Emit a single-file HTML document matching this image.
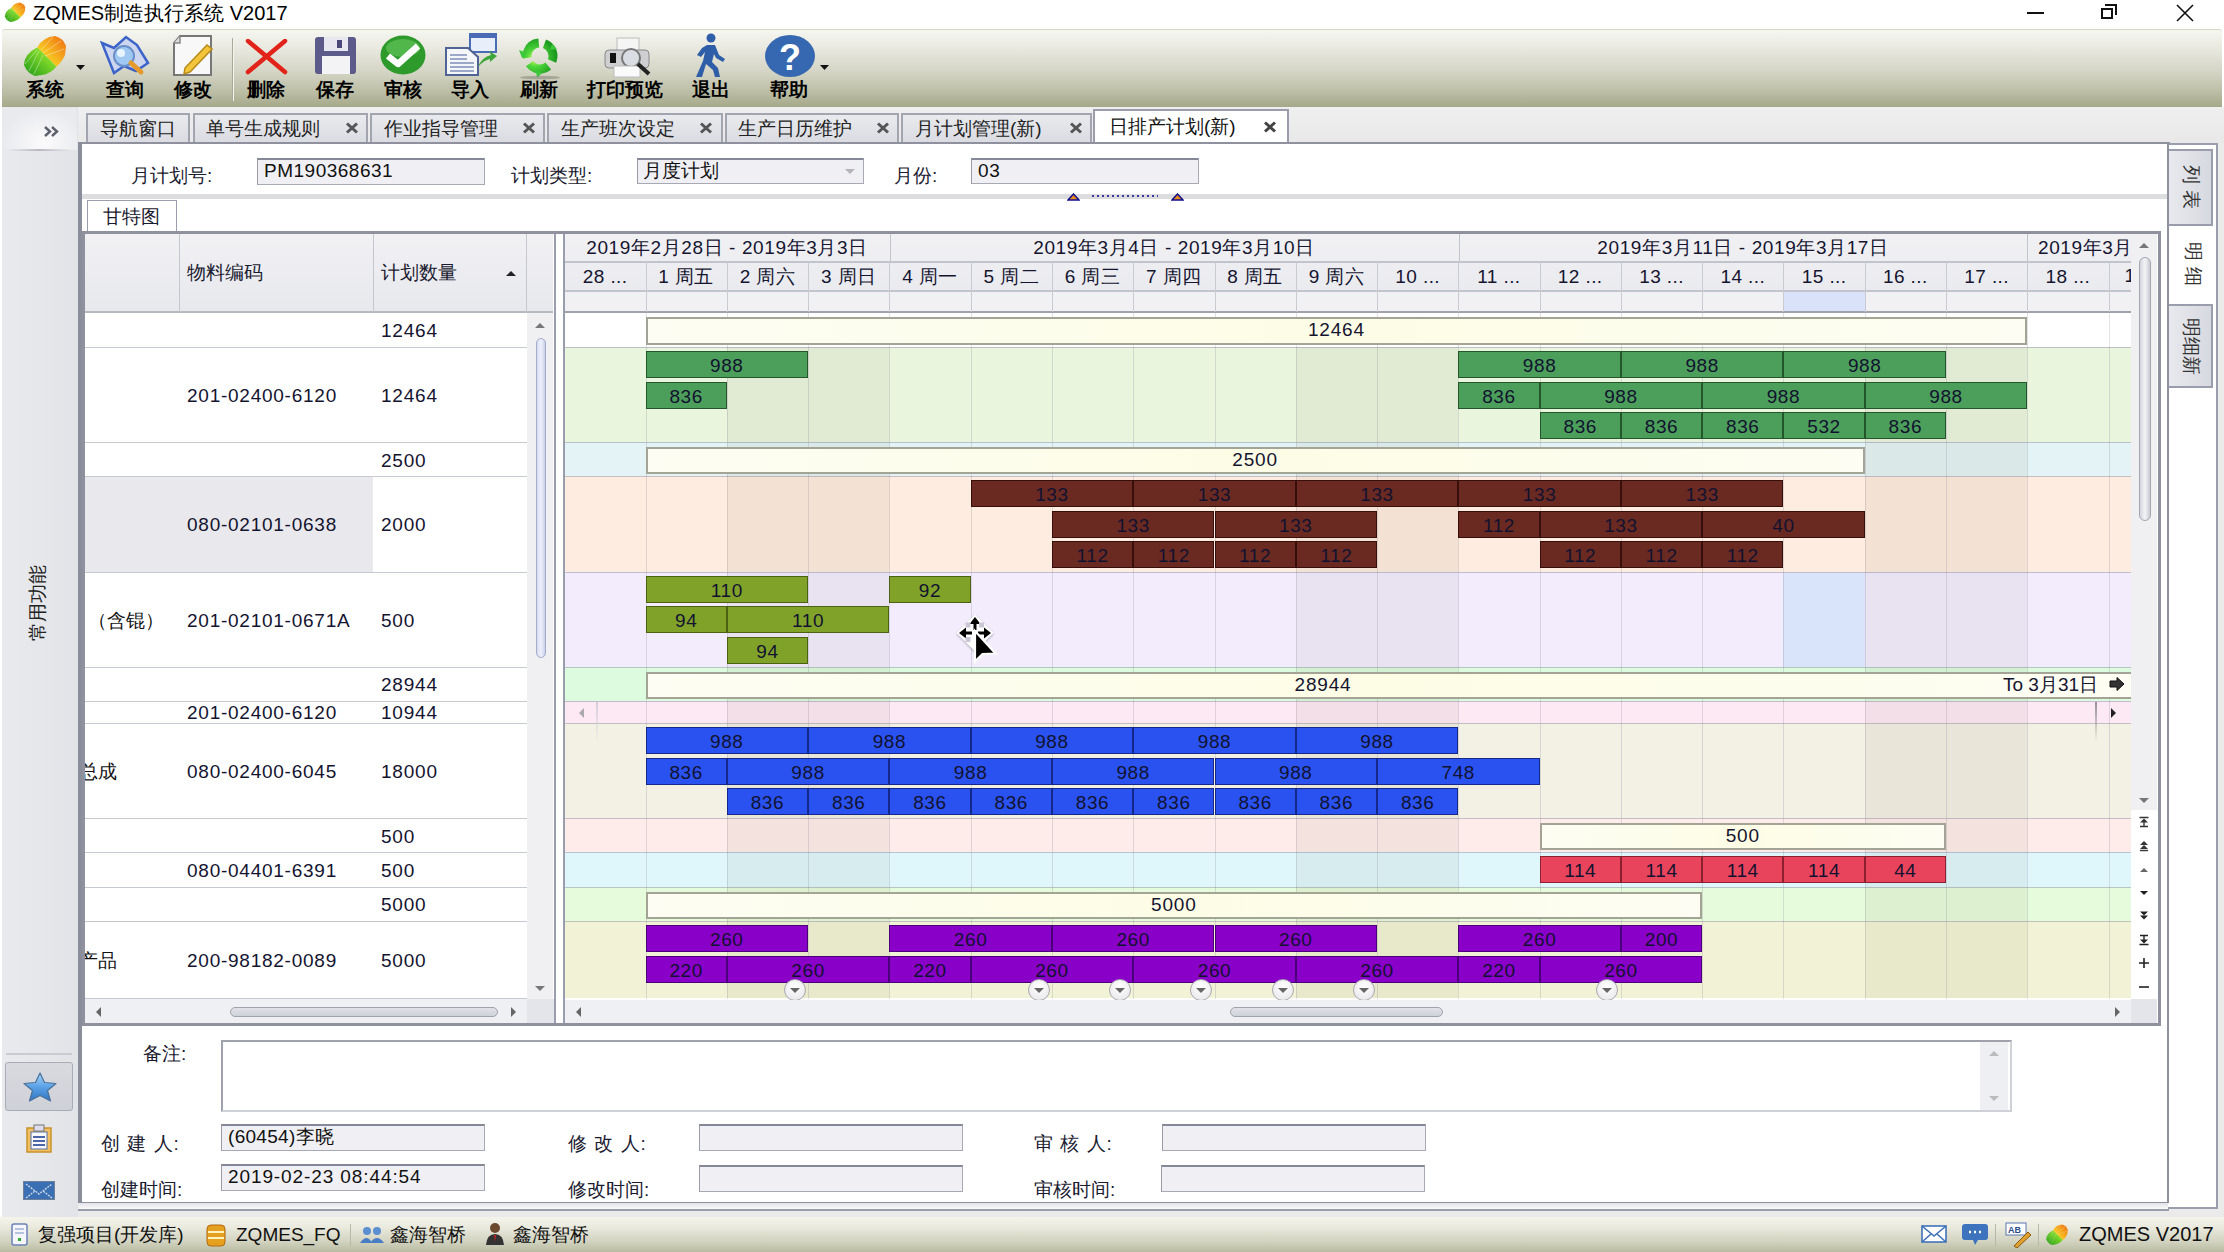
<!DOCTYPE html><html><head><meta charset="utf-8"><style>
*{margin:0;padding:0;box-sizing:border-box}
html,body{width:2224px;height:1252px;overflow:hidden;background:#ffffff;font-family:"Liberation Sans", sans-serif;color:#111}
body{position:relative}
.a{position:absolute}
.c{display:inline-block;min-width:1em;font-style:normal;text-align:center}
.t{position:absolute;white-space:nowrap;font-size:19px;line-height:22px;color:#16162a}
.bar{position:absolute;height:27px;text-align:center;font-size:19px;color:#121230;white-space:nowrap;overflow:hidden;letter-spacing:0.6px}
</style></head><body>
<div class="a" style="left:0;top:0;width:2224px;height:28px;background:#fff"></div>
<svg class="a" style="left:3px;top:2px" width="24" height="20" viewBox="0 0 44 41"><defs><linearGradient id="lgg1" x1="1" y1="0" x2="0" y2="1"><stop offset="0" stop-color="#d8f01a"/><stop offset="0.35" stop-color="#7fd82a"/><stop offset="1" stop-color="#1f9a16"/></linearGradient><linearGradient id="lgo1" x1="0" y1="1" x2="1" y2="0"><stop offset="0" stop-color="#f8f01a"/><stop offset="0.45" stop-color="#f6b820"/><stop offset="1" stop-color="#ee6a10"/></linearGradient></defs><path d="M14.4 12.2L33.6 31.4Q27 39 19 40L12 41Q4 38 1 30Q1 19 14.4 12.2Z" fill="url(#lgg1)"/><path d="M14.4 12.2L33.6 31.4Q39 27 42 20L43 11Q40 3 32 1Q20 2 14.4 12.2Z" fill="url(#lgo1)"/><path d="M6 36L16 16M11 39L20 20M2 29L14 15M20 18L38 6M22 21L41 14M18 15L30 2" stroke="#ffffff" stroke-width="0.8" opacity="0.45"/></svg>
<div class="t" style="left:33px;top:1px;font-size:20px;line-height:24px;color:#000">ZQMES<i class="c">制</i><i class="c">造</i><i class="c">执</i><i class="c">行</i><i class="c">系</i><i class="c">统</i> V2017</div>
<div class="a" style="left:2027px;top:12px;width:17px;height:2px;background:#111"></div>
<div class="a" style="left:2101px;top:8px;width:12px;height:11px;border:2px solid #111;background:#fff"></div>
<div class="a" style="left:2105px;top:4px;width:12px;height:11px;border-top:2px solid #111;border-right:2px solid #111"></div>
<svg class="a" style="left:2176px;top:4px" width="18" height="18"><path d="M1 1L17 17M17 1L1 17" stroke="#111" stroke-width="1.6"/></svg>
<div class="a" style="left:2px;top:29px;width:2220px;height:79px;background:linear-gradient(#f6f6f1 0%,#ebebe3 20%,#d3d4c4 55%,#bcbea6 80%,#a6a88a 100%);border-top:1px solid #d8d8c8;border-bottom:1px solid #8e9072;border-radius:3px 3px 0 0"></div>
<div class="t" style="left:26px;top:79px;font-size:19px;line-height:22px;color:#000;font-weight:bold;letter-spacing:0px"><i class="c">系</i><i class="c">统</i></div>
<div class="t" style="left:106px;top:79px;font-size:19px;line-height:22px;color:#000;font-weight:bold;letter-spacing:0px"><i class="c">查</i><i class="c">询</i></div>
<div class="t" style="left:174px;top:79px;font-size:19px;line-height:22px;color:#000;font-weight:bold;letter-spacing:0px"><i class="c">修</i><i class="c">改</i></div>
<div class="t" style="left:247px;top:79px;font-size:19px;line-height:22px;color:#000;font-weight:bold;letter-spacing:0px"><i class="c">删</i><i class="c">除</i></div>
<div class="t" style="left:316px;top:79px;font-size:19px;line-height:22px;color:#000;font-weight:bold;letter-spacing:0px"><i class="c">保</i><i class="c">存</i></div>
<div class="t" style="left:384px;top:79px;font-size:19px;line-height:22px;color:#000;font-weight:bold;letter-spacing:0px"><i class="c">审</i><i class="c">核</i></div>
<div class="t" style="left:451px;top:79px;font-size:19px;line-height:22px;color:#000;font-weight:bold;letter-spacing:0px"><i class="c">导</i><i class="c">入</i></div>
<div class="t" style="left:520px;top:79px;font-size:19px;line-height:22px;color:#000;font-weight:bold;letter-spacing:0px"><i class="c">刷</i><i class="c">新</i></div>
<div class="t" style="left:587px;top:79px;font-size:19px;line-height:22px;color:#000;font-weight:bold;letter-spacing:0px"><i class="c">打</i><i class="c">印</i><i class="c">预</i><i class="c">览</i></div>
<div class="t" style="left:692px;top:79px;font-size:19px;line-height:22px;color:#000;font-weight:bold;letter-spacing:0px"><i class="c">退</i><i class="c">出</i></div>
<div class="t" style="left:770px;top:79px;font-size:19px;line-height:22px;color:#000;font-weight:bold;letter-spacing:0px"><i class="c">帮</i><i class="c">助</i></div>
<div class="a" style="left:232px;top:38px;width:1px;height:63px;background:#a9aa98"></div>
<div class="a" style="left:233px;top:38px;width:1px;height:63px;background:#f4f4ee"></div>
<svg class="a" style="left:23px;top:35px" width="44" height="41" viewBox="0 0 44 41"><defs><linearGradient id="lgg2" x1="1" y1="0" x2="0" y2="1"><stop offset="0" stop-color="#d8f01a"/><stop offset="0.35" stop-color="#7fd82a"/><stop offset="1" stop-color="#1f9a16"/></linearGradient><linearGradient id="lgo2" x1="0" y1="1" x2="1" y2="0"><stop offset="0" stop-color="#f8f01a"/><stop offset="0.45" stop-color="#f6b820"/><stop offset="1" stop-color="#ee6a10"/></linearGradient></defs><path d="M14.4 12.2L33.6 31.4Q27 39 19 40L12 41Q4 38 1 30Q1 19 14.4 12.2Z" fill="url(#lgg2)"/><path d="M14.4 12.2L33.6 31.4Q39 27 42 20L43 11Q40 3 32 1Q20 2 14.4 12.2Z" fill="url(#lgo2)"/><path d="M6 36L16 16M11 39L20 20M2 29L14 15M20 18L38 6M22 21L41 14M18 15L30 2" stroke="#ffffff" stroke-width="0.8" opacity="0.45"/></svg>
<svg class="a" style="left:76px;top:65px" width="10" height="6"><path d="M0 0H9L4.5 5Z" fill="#111"/></svg>
<svg class="a" style="left:820px;top:65px" width="10" height="6"><path d="M0 0H9L4.5 5Z" fill="#111"/></svg>
<svg class="a" style="left:100px;top:34px" width="50" height="44"><path d="M2 9L14 14L26 3L37 11L48 29L36 37L24 32L14 39Z" fill="#cdd6ee" stroke="#3b63c9" stroke-width="2.5"/><circle cx="24" cy="22" r="10" fill="#9fc8f3" stroke="#6a8fc9" stroke-width="2"/><circle cx="21" cy="19" r="4" fill="#e8f4ff"/><path d="M31 29L41 38" stroke="#e49a2c" stroke-width="5" stroke-linecap="round"/></svg>
<svg class="a" style="left:172px;top:35px" width="44" height="42"><path d="M8 1H39V40H2V8Z" fill="#f8f8f8" stroke="#777" stroke-width="2"/><path d="M2 8H8V1" fill="#ddd" stroke="#888" stroke-width="1.5"/><path d="M13 33L35 10L40 14L18 37L12 39Z" fill="#f2c53a" stroke="#b88a18" stroke-width="1.5"/></svg>
<svg class="a" style="left:245px;top:39px" width="44" height="36"><path d="M3 2L40 33M40 2L3 33" stroke="#e2231a" stroke-width="4.5" stroke-linecap="round"/></svg>
<svg class="a" style="left:313px;top:36px" width="46" height="40"><rect x="2" y="1" width="41" height="37" rx="3" fill="#5c5a8a"/><rect x="11" y="1" width="24" height="14" fill="#e7e7ef"/><rect x="24" y="4" width="5" height="8" fill="#4a4878"/><rect x="9" y="20" width="28" height="18" fill="#f3f3f6"/></svg>
<svg class="a" style="left:379px;top:35px" width="48" height="40"><ellipse cx="24" cy="20" rx="22.5" ry="19.5" fill="#2e9a2b"/><ellipse cx="24" cy="13" rx="17" ry="9" fill="#6fd066" opacity="0.55"/><path d="M9 21L19 29L39 11" stroke="#fff" stroke-width="6.5" fill="none" stroke-linejoin="round"/></svg>
<svg class="a" style="left:445px;top:33px" width="54" height="46"><rect x="25" y="1" width="26" height="18" fill="#e8eefa" stroke="#4a6cb4" stroke-width="2"/><rect x="25" y="1" width="26" height="4" fill="#4a6cb4"/><path d="M1 15H23L33 24V42H1Z" fill="#f4f6fa" stroke="#4f6394" stroke-width="2"/><path d="M5 22H22M5 26H22M5 30H29M5 34H29M5 38H29" stroke="#7d8fb8" stroke-width="1.5"/><path d="M33 34Q37 24 46 22L44 18L52 23L45 29L45 26Q39 27 33 34Z" fill="#3ea53a"/></svg>
<svg class="a" style="left:515px;top:36px" width="50" height="44"><defs><radialGradient id="rcg" cx="0.35" cy="0.35" r="0.8"><stop offset="0" stop-color="#d8ff60"/><stop offset="0.4" stop-color="#4fd83a"/><stop offset="1" stop-color="#1c9a20"/></radialGradient></defs><circle cx="25" cy="20" r="13" stroke="url(#rcg)" stroke-width="9" fill="none" stroke-dasharray="21 6.2" transform="rotate(-70 25 20)"/><path d="M37 8L42 13L35 14Z M7 22L4 14L12 17Z M27 37L22 42L21 34Z" fill="#3cc83a"/><ellipse cx="25" cy="41.5" rx="20" ry="1.8" fill="#8a8a7c" opacity="0.6"/></svg>
<svg class="a" style="left:602px;top:36px" width="52" height="42"><rect x="15" y="2" width="22" height="14" fill="#f5f5f5" stroke="#bbb"/><rect x="3" y="14" width="44" height="18" rx="4" fill="#cfcfd2" stroke="#888"/><rect x="8" y="17" width="6" height="10" fill="#111"/><circle cx="29" cy="22" r="9" fill="#d9dde3" stroke="#777" stroke-width="2"/><rect x="12" y="30" width="26" height="11" fill="#fafafa" stroke="#bbb"/><path d="M36 28L47 38" stroke="#222" stroke-width="4"/></svg>
<svg class="a" style="left:693px;top:33px" width="36" height="46"><circle cx="18" cy="5" r="4.5" fill="#2f5ea8"/><path d="M14 12L22 12L26 22L32 26L30 29L23 25L21 21L19 29L25 35L27 44L22 44L20 37L13 31L9 44L3 44L10 28L12 19L8 24L4 22L9 15Z" fill="#2f5ea8"/></svg>
<svg class="a" style="left:764px;top:34px" width="52" height="44"><ellipse cx="26" cy="22" rx="25" ry="21" fill="#3568b0"/><text x="26" y="36" text-anchor="middle" font-family="Liberation Sans" font-weight="bold" font-size="36" fill="#fff">?</text></svg>
<div class="a" style="left:0;top:107px;width:2224px;height:1110px;background:#eaeaea"></div>
<div class="a" style="left:0;top:107px;width:2224px;height:36px;background:linear-gradient(#efefef,#e8e8e8)"></div>
<div class="a" style="left:86px;top:113px;width:104px;height:31px;background:linear-gradient(#e9eaee,#d9dbe1);border:2px solid #a2a5b0;border-bottom:none"></div>
<div class="t" style="left:100px;top:118px;font-size:19px;line-height:22px;color:#222"><i class="c">导</i><i class="c">航</i><i class="c">窗</i><i class="c">口</i></div>
<div class="a" style="left:193px;top:113px;width:175px;height:31px;background:linear-gradient(#e9eaee,#d9dbe1);border:2px solid #a2a5b0;border-bottom:none"></div>
<div class="t" style="left:206px;top:118px;font-size:19px;line-height:22px;color:#222"><i class="c">单</i><i class="c">号</i><i class="c">生</i><i class="c">成</i><i class="c">规</i><i class="c">则</i></div>
<svg class="a" style="left:345px;top:122px" width="14" height="12"><path d="M2 1.5L12 10.5M12 1.5L2 10.5" stroke="#555" stroke-width="3"/></svg>
<div class="a" style="left:370px;top:113px;width:175px;height:31px;background:linear-gradient(#e9eaee,#d9dbe1);border:2px solid #a2a5b0;border-bottom:none"></div>
<div class="t" style="left:384px;top:118px;font-size:19px;line-height:22px;color:#222"><i class="c">作</i><i class="c">业</i><i class="c">指</i><i class="c">导</i><i class="c">管</i><i class="c">理</i></div>
<svg class="a" style="left:522px;top:122px" width="14" height="12"><path d="M2 1.5L12 10.5M12 1.5L2 10.5" stroke="#555" stroke-width="3"/></svg>
<div class="a" style="left:547px;top:113px;width:176px;height:31px;background:linear-gradient(#e9eaee,#d9dbe1);border:2px solid #a2a5b0;border-bottom:none"></div>
<div class="t" style="left:561px;top:118px;font-size:19px;line-height:22px;color:#222"><i class="c">生</i><i class="c">产</i><i class="c">班</i><i class="c">次</i><i class="c">设</i><i class="c">定</i></div>
<svg class="a" style="left:699px;top:122px" width="14" height="12"><path d="M2 1.5L12 10.5M12 1.5L2 10.5" stroke="#555" stroke-width="3"/></svg>
<div class="a" style="left:725px;top:113px;width:174px;height:31px;background:linear-gradient(#e9eaee,#d9dbe1);border:2px solid #a2a5b0;border-bottom:none"></div>
<div class="t" style="left:738px;top:118px;font-size:19px;line-height:22px;color:#222"><i class="c">生</i><i class="c">产</i><i class="c">日</i><i class="c">历</i><i class="c">维</i><i class="c">护</i></div>
<svg class="a" style="left:876px;top:122px" width="14" height="12"><path d="M2 1.5L12 10.5M12 1.5L2 10.5" stroke="#555" stroke-width="3"/></svg>
<div class="a" style="left:901px;top:113px;width:191px;height:31px;background:linear-gradient(#e9eaee,#d9dbe1);border:2px solid #a2a5b0;border-bottom:none"></div>
<div class="t" style="left:915px;top:118px;font-size:19px;line-height:22px;color:#222"><i class="c">月</i><i class="c">计</i><i class="c">划</i><i class="c">管</i><i class="c">理</i>(<i class="c">新</i>)</div>
<svg class="a" style="left:1069px;top:122px" width="14" height="12"><path d="M2 1.5L12 10.5M12 1.5L2 10.5" stroke="#555" stroke-width="3"/></svg>
<div class="a" style="left:1093px;top:109px;width:196px;height:35px;background:#fff;border:2px solid #9a9dab;border-bottom:none"></div>
<div class="t" style="left:1109px;top:116px;font-size:19px;line-height:22px;color:#111"><i class="c">日</i><i class="c">排</i><i class="c">产</i><i class="c">计</i><i class="c">划</i>(<i class="c">新</i>)</div>
<svg class="a" style="left:1263px;top:121px" width="14" height="12"><path d="M2 1.5L12 10.5M12 1.5L2 10.5" stroke="#444" stroke-width="3"/></svg>
<div class="a" style="left:0;top:107px;width:2px;height:1110px;background:#fff"></div>
<div class="a" style="left:2px;top:107px;width:76px;height:1110px;background:linear-gradient(90deg,#e9eaee,#e5e6ea 60%,#e2e3e8)"></div>
<div class="a" style="left:2px;top:108px;width:75px;height:42px;background:radial-gradient(ellipse at 55% 85%,#fbfbfc,#e9eaee 70%)"></div>
<svg class="a" style="left:44px;top:126px" width="16" height="11"><path d="M1 1L6 5.5L1 10M8 1L13 5.5L8 10" stroke="#5d606c" stroke-width="2.4" fill="none"/></svg>
<div class="a" style="left:6px;top:149px;width:66px;height:2px;background:linear-gradient(90deg,rgba(180,180,190,0),#b8b9c2,rgba(180,180,190,0))"></div>
<div class="t" style="left:-2px;top:592px;width:80px;text-align:center;transform:rotate(-90deg);font-size:19px;line-height:22px;color:#222"><i class="c">常</i><i class="c">用</i><i class="c">功</i><i class="c">能</i></div>
<div class="a" style="left:6px;top:1053px;width:66px;height:2px;background:#c9cad2"></div>
<div class="a" style="left:5px;top:1062px;width:68px;height:49px;background:linear-gradient(#d9dae0,#cfd1d8);border:1px solid #a9abb5;border-radius:3px"></div>
<svg class="a" style="left:21px;top:1071px" width="38" height="32"><defs><linearGradient id="stg" x1="0" y1="0" x2="0" y2="1"><stop offset="0" stop-color="#a9d4f8"/><stop offset="0.5" stop-color="#5aa2e6"/><stop offset="1" stop-color="#2f74c4"/></linearGradient></defs><path d="M19 2L23.5 11.5L35 12.5L26.5 19.5L29.5 30L19 24.5L8.5 30L11.5 19.5L3 12.5L14.5 11.5Z" fill="url(#stg)" stroke="#4a6f9a" stroke-width="1.2" stroke-linejoin="round"/></svg>
<svg class="a" style="left:25px;top:1124px" width="30" height="30"><rect x="2" y="4" width="24" height="24" fill="#f2c060" stroke="#c9922a" stroke-width="1.5"/><rect x="6" y="8" width="16" height="17" fill="#f8f8fb" stroke="#5570a8"/><rect x="9" y="1" width="10" height="6" fill="#dde" stroke="#777"/><path d="M8 13H20M8 17H20M8 21H20" stroke="#4a66a8" stroke-width="2"/></svg>
<svg class="a" style="left:23px;top:1181px" width="32" height="19"><rect x="0.5" y="0.5" width="31" height="18" fill="#3b6fb4" stroke="#6d7f99"/><path d="M3 3L16 13L29 3M3 17L12 10M29 17L20 10" stroke="#c9d6e6" stroke-width="1.4" fill="none" stroke-dasharray="2 1"/></svg>
<div class="a" style="left:0;top:1217px;width:2224px;height:35px;background:linear-gradient(#f4f4ec,#e9e9dd 30%,#d2d3c0 70%,#b9bba0)"></div>
<div class="t" style="left:38px;top:1224px;font-size:19px;line-height:22px;color:#111"><i class="c">复</i><i class="c">强</i><i class="c">项</i><i class="c">目</i>(<i class="c">开</i><i class="c">发</i><i class="c">库</i>)</div>
<div class="t" style="left:236px;top:1224px;font-size:19px;line-height:22px;color:#111">ZQMES_FQ</div>
<div class="t" style="left:390px;top:1224px;font-size:19px;line-height:22px;color:#111"><i class="c">鑫</i><i class="c">海</i><i class="c">智</i><i class="c">桥</i></div>
<div class="t" style="left:513px;top:1224px;font-size:19px;line-height:22px;color:#111"><i class="c">鑫</i><i class="c">海</i><i class="c">智</i><i class="c">桥</i></div>
<svg class="a" style="left:11px;top:1223px" width="18" height="24"><rect x="1" y="1" width="15" height="21" rx="2" fill="#f4f6fb" stroke="#6b82b8" stroke-width="1.5"/><path d="M4 6H13M4 10H13" stroke="#7b8ec0"/><rect x="7" y="15" width="3" height="3" fill="#3a3"/></svg>
<svg class="a" style="left:206px;top:1224px" width="20" height="23"><rect x="1" y="1" width="18" height="21" rx="4" fill="#e6a020" stroke="#b06a10"/><path d="M2 8H18M2 14H18" stroke="#fff3c0" stroke-width="2"/></svg>
<div class="a" style="left:350px;top:1224px;width:1px;height:22px;background:#b9baa5"></div>
<svg class="a" style="left:359px;top:1225px" width="26" height="20"><circle cx="8" cy="6" r="4" fill="#5b8fd0"/><circle cx="18" cy="6" r="4" fill="#5b8fd0"/><path d="M1 18Q8 8 13 18M11 18Q18 8 25 18" fill="#4a7ec4"/></svg>
<svg class="a" style="left:485px;top:1222px" width="20" height="24"><circle cx="10" cy="6" r="5" fill="#6b4a30"/><path d="M1 23Q2 12 10 12Q18 12 19 23Z" fill="#333"/><path d="M9 13L10 20L11 13" fill="#c22"/></svg>
<svg class="a" style="left:1921px;top:1225px" width="26" height="19"><rect x="1" y="1" width="24" height="16" fill="#fff" stroke="#3f73b8" stroke-width="1.6"/><path d="M1 1L13 11L25 1M1 17L10 9M25 17L16 9" stroke="#3f73b8" stroke-width="1.6" fill="none"/></svg>
<svg class="a" style="left:1961px;top:1223px" width="28" height="24"><rect x="1" y="1" width="26" height="16" rx="3" fill="#3e74bd"/><path d="M12 17L14 22L17 17Z" fill="#3e74bd"/><path d="M8 9H10M13 9H15M18 9H20" stroke="#fff" stroke-width="2.5"/></svg>
<div class="a" style="left:1995px;top:1224px;width:1px;height:22px;background:#b9baa5"></div>
<svg class="a" style="left:2004px;top:1222px" width="28" height="26"><rect x="2" y="1" width="20" height="12" fill="#fff" stroke="#5778b0"/><text x="4" y="11" font-size="9" font-family="Liberation Sans" font-weight="bold" fill="#2b4c88">AB</text><path d="M10 24L24 10L27 13L13 26Z" fill="#e0a030" stroke="#8a5a10"/></svg>
<div class="a" style="left:2038px;top:1224px;width:1px;height:22px;background:#b9baa5"></div>
<svg class="a" style="left:2045px;top:1224px" width="24" height="21" viewBox="0 0 44 41"><defs><linearGradient id="lgg3" x1="1" y1="0" x2="0" y2="1"><stop offset="0" stop-color="#d8f01a"/><stop offset="0.35" stop-color="#7fd82a"/><stop offset="1" stop-color="#1f9a16"/></linearGradient><linearGradient id="lgo3" x1="0" y1="1" x2="1" y2="0"><stop offset="0" stop-color="#f8f01a"/><stop offset="0.45" stop-color="#f6b820"/><stop offset="1" stop-color="#ee6a10"/></linearGradient></defs><path d="M14.4 12.2L33.6 31.4Q27 39 19 40L12 41Q4 38 1 30Q1 19 14.4 12.2Z" fill="url(#lgg3)"/><path d="M14.4 12.2L33.6 31.4Q39 27 42 20L43 11Q40 3 32 1Q20 2 14.4 12.2Z" fill="url(#lgo3)"/><path d="M6 36L16 16M11 39L20 20M2 29L14 15M20 18L38 6M22 21L41 14M18 15L30 2" stroke="#ffffff" stroke-width="0.8" opacity="0.45"/></svg>
<div class="t" style="left:2079px;top:1223px;font-size:20px;line-height:22px;color:#111">ZQMES V2017</div>
<div class="a" style="left:79px;top:142px;width:2091px;height:1065px;background:#fff;border:2px solid #8f929e;border-right:none;border-bottom:none"></div>
<div class="a" style="left:79px;top:1202px;width:2091px;height:1px;background:#8f929e"></div>
<div class="a" style="left:79px;top:1203px;width:2091px;height:6px;background:linear-gradient(#e2e3e8,#fafafa)"></div>
<div class="a" style="left:78px;top:1209px;width:2140px;height:2px;background:#9a9dab"></div>
<div class="t" style="left:131px;top:165px;font-size:19px;line-height:22px;color:#1a1a30;"><i class="c">月</i><i class="c">计</i><i class="c">划</i><i class="c">号</i>:</div>
<div class="a" style="left:257px;top:158px;width:228px;height:27px;background:#f0f0f4;border:1px solid #a7aab5;border-top:2px solid #858896;border-left:1px solid #9a9da9"></div>
<div class="t" style="left:264px;top:160px;font-size:19px;line-height:22px;color:#111;letter-spacing:0.5px">PM190368631</div>
<div class="t" style="left:511px;top:165px;font-size:19px;line-height:22px;color:#1a1a30;"><i class="c">计</i><i class="c">划</i><i class="c">类</i><i class="c">型</i>:</div>
<div class="a" style="left:637px;top:158px;width:227px;height:26px;background:#f0f0f4;border:1px solid #a7aab5;border-top:2px solid #858896;border-left:1px solid #9a9da9"></div>
<div class="t" style="left:643px;top:160px;font-size:19px;line-height:22px;color:#111;letter-spacing:0"><i class="c">月</i><i class="c">度</i><i class="c">计</i><i class="c">划</i></div>
<svg class="a" style="left:845.0px;top:168.5px" width="10" height="5"><path d="M0 0H10L5 5Z" fill="#b5b5b5"/></svg>
<div class="t" style="left:894px;top:165px;font-size:19px;line-height:22px;color:#1a1a30;"><i class="c">月</i><i class="c">份</i>:</div>
<div class="a" style="left:971px;top:158px;width:228px;height:26px;background:#f0f0f4;border:1px solid #a7aab5;border-top:2px solid #858896;border-left:1px solid #9a9da9"></div>
<div class="t" style="left:978px;top:160px;font-size:19px;line-height:22px;color:#111;letter-spacing:0.6px">03</div>
<div class="a" style="left:82px;top:194px;width:2087px;height:5px;background:#dddddf"></div>
<svg class="a" style="left:1067px;top:193px" width="13" height="8"><path d="M6.5 1L12 7H1Z" fill="#f08a20" stroke="#10108a" stroke-width="1.5"/></svg>
<svg class="a" style="left:1171px;top:193px" width="13" height="8"><path d="M6.5 1L12 7H1Z" fill="#f08a20" stroke="#10108a" stroke-width="1.5"/></svg>
<div class="a" style="left:1092px;top:195px;width:66px;height:2px;background:repeating-linear-gradient(90deg,#3a3aa0 0 2px,transparent 2px 5px)"></div>
<div class="a" style="left:87px;top:200px;width:90px;height:33px;background:#fff;border:1px solid #9a9dab;border-bottom:none"></div>
<div class="t" style="left:103px;top:206px;font-size:19px;line-height:22px;color:#1a1a30;"><i class="c">甘</i><i class="c">特</i><i class="c">图</i></div>
<div class="a" style="left:82px;top:231px;width:2079px;height:795px;border:3px solid #8f929e;background:#fff"></div>
<div class="a" style="left:78px;top:142px;width:4px;height:1061px;background:#8a8d9a"></div>
<div class="a" style="left:85px;top:234px;width:468px;height:79px;background:linear-gradient(#f1f1f4,#e7e8ec)"></div>
<div class="a" style="left:85px;top:311px;width:468px;height:2px;background:#b6b8c2"></div>
<div class="a" style="left:179px;top:234px;width:1px;height:78px;background:#c5c7cf"></div>
<div class="a" style="left:373px;top:234px;width:1px;height:78px;background:#c5c7cf"></div>
<div class="a" style="left:526px;top:234px;width:1px;height:78px;background:#c5c7cf"></div>
<div class="t" style="left:187px;top:262px;font-size:19px;line-height:22px;color:#1a1a30;"><i class="c">物</i><i class="c">料</i><i class="c">编</i><i class="c">码</i></div>
<div class="t" style="left:381px;top:262px;font-size:19px;line-height:22px;color:#1a1a30;"><i class="c">计</i><i class="c">划</i><i class="c">数</i><i class="c">量</i></div>
<svg class="a" style="left:506.0px;top:270.5px" width="10" height="5"><path d="M0 5H10L5 0Z" fill="#222"/></svg>
<div class="a" style="left:85px;top:477px;width:288px;height:95px;background:#e9e9ed"></div>
<div class="a" style="left:85px;top:347px;width:442px;height:1px;background:#c6c8d2"></div>
<div class="t" style="left:381px;top:320px;font-size:19px;line-height:22px;color:#141430;letter-spacing:0.8px">12464</div>
<div class="a" style="left:85px;top:442px;width:442px;height:1px;background:#c6c8d2"></div>
<div class="t" style="left:187px;top:385px;font-size:19px;line-height:22px;color:#141430;letter-spacing:0.75px">201-02400-6120</div>
<div class="t" style="left:381px;top:385px;font-size:19px;line-height:22px;color:#141430;letter-spacing:0.8px">12464</div>
<div class="a" style="left:85px;top:476px;width:442px;height:1px;background:#c6c8d2"></div>
<div class="t" style="left:381px;top:450px;font-size:19px;line-height:22px;color:#141430;letter-spacing:0.8px">2500</div>
<div class="a" style="left:85px;top:572px;width:442px;height:1px;background:#c6c8d2"></div>
<div class="t" style="left:187px;top:514px;font-size:19px;line-height:22px;color:#141430;letter-spacing:0.75px">080-02101-0638</div>
<div class="t" style="left:381px;top:514px;font-size:19px;line-height:22px;color:#141430;letter-spacing:0.8px">2000</div>
<div class="a" style="left:85px;top:667px;width:442px;height:1px;background:#c6c8d2"></div>
<div class="t" style="left:88px;top:610px;font-size:19px;line-height:22px;color:#111"><i class="c">（</i><i class="c">含</i><i class="c">锟</i><i class="c">）</i></div>
<div class="t" style="left:187px;top:610px;font-size:19px;line-height:22px;color:#141430;letter-spacing:0.75px">201-02101-0671A</div>
<div class="t" style="left:381px;top:610px;font-size:19px;line-height:22px;color:#141430;letter-spacing:0.8px">500</div>
<div class="a" style="left:85px;top:701px;width:442px;height:1px;background:#c6c8d2"></div>
<div class="t" style="left:381px;top:674px;font-size:19px;line-height:22px;color:#141430;letter-spacing:0.8px">28944</div>
<div class="a" style="left:85px;top:723px;width:442px;height:1px;background:#c6c8d2"></div>
<div class="t" style="left:187px;top:702px;font-size:19px;line-height:22px;color:#141430;letter-spacing:0.75px">201-02400-6120</div>
<div class="t" style="left:381px;top:702px;font-size:19px;line-height:22px;color:#141430;letter-spacing:0.8px">10944</div>
<div class="a" style="left:85px;top:818px;width:442px;height:1px;background:#c6c8d2"></div>
<div class="a" style="left:85px;top:761px;width:40px;height:24px;overflow:hidden"><div class="t" style="left:-6px;top:0;font-size:19px;line-height:22px;color:#111"><i class="c">总</i><i class="c">成</i></div></div>
<div class="t" style="left:187px;top:761px;font-size:19px;line-height:22px;color:#141430;letter-spacing:0.75px">080-02400-6045</div>
<div class="t" style="left:381px;top:761px;font-size:19px;line-height:22px;color:#141430;letter-spacing:0.8px">18000</div>
<div class="a" style="left:85px;top:852px;width:442px;height:1px;background:#c6c8d2"></div>
<div class="t" style="left:381px;top:826px;font-size:19px;line-height:22px;color:#141430;letter-spacing:0.8px">500</div>
<div class="a" style="left:85px;top:887px;width:442px;height:1px;background:#c6c8d2"></div>
<div class="t" style="left:187px;top:860px;font-size:19px;line-height:22px;color:#141430;letter-spacing:0.75px">080-04401-6391</div>
<div class="t" style="left:381px;top:860px;font-size:19px;line-height:22px;color:#141430;letter-spacing:0.8px">500</div>
<div class="a" style="left:85px;top:921px;width:442px;height:1px;background:#c6c8d2"></div>
<div class="t" style="left:381px;top:894px;font-size:19px;line-height:22px;color:#141430;letter-spacing:0.8px">5000</div>
<div class="a" style="left:85px;top:950px;width:40px;height:24px;overflow:hidden"><div class="t" style="left:-6px;top:0;font-size:19px;line-height:22px;color:#111"><i class="c">产</i><i class="c">品</i></div></div>
<div class="t" style="left:187px;top:950px;font-size:19px;line-height:22px;color:#141430;letter-spacing:0.75px">200-98182-0089</div>
<div class="t" style="left:381px;top:950px;font-size:19px;line-height:22px;color:#141430;letter-spacing:0.8px">5000</div>
<div class="a" style="left:527px;top:313px;width:26px;height:686px;background:#f0f0f3"></div>
<svg class="a" style="left:535.0px;top:322.5px" width="10" height="5"><path d="M0 5H10L5 0Z" fill="#777"/></svg>
<div class="a" style="left:536px;top:338px;width:10px;height:320px;border-radius:5px;background:linear-gradient(90deg,#d5dbf2,#eef1fb,#c8cfeb);border:1px solid #a5acc8"></div>
<svg class="a" style="left:535.0px;top:985.5px" width="10" height="5"><path d="M0 0H10L5 5Z" fill="#777"/></svg>
<div class="a" style="left:85px;top:999px;width:468px;height:24px;background:#eff0f3"></div>
<div class="a" style="left:85px;top:998px;width:442px;height:1px;background:#c6c8d2"></div>
<svg class="a" style="left:95.5px;top:1007.0px" width="5" height="10"><path d="M5 0V10L0 5Z" fill="#666"/></svg>
<div class="a" style="left:230px;top:1007px;width:268px;height:10px;border-radius:5px;background:linear-gradient(#e1e2e8,#cfd1d9);border:1px solid #a0a3ad"></div>
<svg class="a" style="left:510.5px;top:1007.0px" width="5" height="10"><path d="M0 0V10L5 5Z" fill="#666"/></svg>
<div class="a" style="left:527px;top:999px;width:28px;height:24px;background:#e4e5ea"></div>
<div class="a" style="left:554px;top:234px;width:2px;height:789px;background:#9a9dab"></div>
<div class="a" style="left:556px;top:234px;width:7px;height:789px;background:#fff"></div>
<div class="a" style="left:563px;top:234px;width:2px;height:789px;background:#9a9dab"></div>
<div class="a" style="left:565px;top:234px;width:1566px;height:79px;background:linear-gradient(#f1f1f4,#e7e8ec)"></div>
<div class="a" style="left:565px;top:291px;width:1566px;height:21px;background:#f1f1f3"></div>
<div class="a" style="left:1783.4px;top:291px;width:81.3px;height:21px;background:#d9e2f8"></div>
<div class="a" style="left:565px;top:261px;width:1566px;height:2px;background:#c2c4cd"></div>
<div class="a" style="left:565px;top:290px;width:1566px;height:2px;background:#c2c4cd"></div>
<div class="a" style="left:565px;top:311px;width:1566px;height:2px;background:#9fa2ad"></div>
<div class="a" style="left:890.0px;top:234px;width:1px;height:28px;background:#c2c4cd"></div>
<div class="a" style="left:1459.0px;top:234px;width:1px;height:28px;background:#c2c4cd"></div>
<div class="a" style="left:2027.3px;top:234px;width:1px;height:28px;background:#c2c4cd"></div>
<div class="t" style="left:527px;width:400px;text-align:center;top:237px;font-size:19px;line-height:22px;color:#151530;letter-spacing:0.6px">2019<i class="c">年</i>2<i class="c">月</i>28<i class="c">日</i> - 2019<i class="c">年</i>3<i class="c">月</i>3<i class="c">日</i></div>
<div class="t" style="left:974px;width:400px;text-align:center;top:237px;font-size:19px;line-height:22px;color:#151530;letter-spacing:0.6px">2019<i class="c">年</i>3<i class="c">月</i>4<i class="c">日</i> - 2019<i class="c">年</i>3<i class="c">月</i>10<i class="c">日</i></div>
<div class="t" style="left:1543px;width:400px;text-align:center;top:237px;font-size:19px;line-height:22px;color:#151530;letter-spacing:0.6px">2019<i class="c">年</i>3<i class="c">月</i>11<i class="c">日</i> - 2019<i class="c">年</i>3<i class="c">月</i>17<i class="c">日</i></div>
<div class="a" style="left:2027px;top:234px;width:104px;height:56px;overflow:hidden"><div class="t" style="left:11px;top:3px;font-size:19px;line-height:22px;color:#151530;letter-spacing:0.6px">2019<i class="c">年</i>3<i class="c">月</i>18<i class="c">日</i></div></div>
<div class="t" style="left:565.1px;width:80px;text-align:center;top:266px;font-size:19px;line-height:22px;color:#151530;letter-spacing:0.4px">28 ...</div>
<div class="a" style="left:645.5px;top:262px;width:1px;height:50px;background:#c9cbd3"></div>
<div class="t" style="left:646.1px;width:80px;text-align:center;top:266px;font-size:19px;line-height:22px;color:#151530;letter-spacing:0.4px">1 <i class="c">周</i><i class="c">五</i></div>
<div class="a" style="left:726.8px;top:262px;width:1px;height:50px;background:#c9cbd3"></div>
<div class="t" style="left:727.4px;width:80px;text-align:center;top:266px;font-size:19px;line-height:22px;color:#151530;letter-spacing:0.4px">2 <i class="c">周</i><i class="c">六</i></div>
<div class="a" style="left:808.1px;top:262px;width:1px;height:50px;background:#c9cbd3"></div>
<div class="t" style="left:808.7px;width:80px;text-align:center;top:266px;font-size:19px;line-height:22px;color:#151530;letter-spacing:0.4px">3 <i class="c">周</i><i class="c">日</i></div>
<div class="a" style="left:889.3px;top:262px;width:1px;height:50px;background:#c9cbd3"></div>
<div class="t" style="left:890.0px;width:80px;text-align:center;top:266px;font-size:19px;line-height:22px;color:#151530;letter-spacing:0.4px">4 <i class="c">周</i><i class="c">一</i></div>
<div class="a" style="left:970.6px;top:262px;width:1px;height:50px;background:#c9cbd3"></div>
<div class="t" style="left:971.3px;width:80px;text-align:center;top:266px;font-size:19px;line-height:22px;color:#151530;letter-spacing:0.4px">5 <i class="c">周</i><i class="c">二</i></div>
<div class="a" style="left:1051.9px;top:262px;width:1px;height:50px;background:#c9cbd3"></div>
<div class="t" style="left:1052.5px;width:80px;text-align:center;top:266px;font-size:19px;line-height:22px;color:#151530;letter-spacing:0.4px">6 <i class="c">周</i><i class="c">三</i></div>
<div class="a" style="left:1133.2px;top:262px;width:1px;height:50px;background:#c9cbd3"></div>
<div class="t" style="left:1133.8px;width:80px;text-align:center;top:266px;font-size:19px;line-height:22px;color:#151530;letter-spacing:0.4px">7 <i class="c">周</i><i class="c">四</i></div>
<div class="a" style="left:1214.5px;top:262px;width:1px;height:50px;background:#c9cbd3"></div>
<div class="t" style="left:1215.1px;width:80px;text-align:center;top:266px;font-size:19px;line-height:22px;color:#151530;letter-spacing:0.4px">8 <i class="c">周</i><i class="c">五</i></div>
<div class="a" style="left:1295.7px;top:262px;width:1px;height:50px;background:#c9cbd3"></div>
<div class="t" style="left:1296.4px;width:80px;text-align:center;top:266px;font-size:19px;line-height:22px;color:#151530;letter-spacing:0.4px">9 <i class="c">周</i><i class="c">六</i></div>
<div class="a" style="left:1377.0px;top:262px;width:1px;height:50px;background:#c9cbd3"></div>
<div class="t" style="left:1377.7px;width:80px;text-align:center;top:266px;font-size:19px;line-height:22px;color:#151530;letter-spacing:0.4px">10 ...</div>
<div class="a" style="left:1458.3px;top:262px;width:1px;height:50px;background:#c9cbd3"></div>
<div class="t" style="left:1458.9px;width:80px;text-align:center;top:266px;font-size:19px;line-height:22px;color:#151530;letter-spacing:0.4px">11 ...</div>
<div class="a" style="left:1539.6px;top:262px;width:1px;height:50px;background:#c9cbd3"></div>
<div class="t" style="left:1540.2px;width:80px;text-align:center;top:266px;font-size:19px;line-height:22px;color:#151530;letter-spacing:0.4px">12 ...</div>
<div class="a" style="left:1620.9px;top:262px;width:1px;height:50px;background:#c9cbd3"></div>
<div class="t" style="left:1621.5px;width:80px;text-align:center;top:266px;font-size:19px;line-height:22px;color:#151530;letter-spacing:0.4px">13 ...</div>
<div class="a" style="left:1702.1px;top:262px;width:1px;height:50px;background:#c9cbd3"></div>
<div class="t" style="left:1702.8px;width:80px;text-align:center;top:266px;font-size:19px;line-height:22px;color:#151530;letter-spacing:0.4px">14 ...</div>
<div class="a" style="left:1783.4px;top:262px;width:1px;height:50px;background:#c9cbd3"></div>
<div class="t" style="left:1784.1px;width:80px;text-align:center;top:266px;font-size:19px;line-height:22px;color:#151530;letter-spacing:0.4px">15 ...</div>
<div class="a" style="left:1864.7px;top:262px;width:1px;height:50px;background:#c9cbd3"></div>
<div class="t" style="left:1865.3px;width:80px;text-align:center;top:266px;font-size:19px;line-height:22px;color:#151530;letter-spacing:0.4px">16 ...</div>
<div class="a" style="left:1946.0px;top:262px;width:1px;height:50px;background:#c9cbd3"></div>
<div class="t" style="left:1946.6px;width:80px;text-align:center;top:266px;font-size:19px;line-height:22px;color:#151530;letter-spacing:0.4px">17 ...</div>
<div class="a" style="left:2027.3px;top:262px;width:1px;height:50px;background:#c9cbd3"></div>
<div class="t" style="left:2027.9px;width:80px;text-align:center;top:266px;font-size:19px;line-height:22px;color:#151530;letter-spacing:0.4px">18 ...</div>
<div class="a" style="left:2108.5px;top:262px;width:1px;height:50px;background:#c9cbd3"></div>
<div class="a" style="left:2108.5px;top:262px;width:22.5px;height:28px;overflow:hidden"><div class="t" style="left:16px;top:3px;font-size:19px;line-height:22px;color:#151530">19 ...</div></div>
<div class="a" style="left:565px;top:312.8px;width:1566px;height:34.2px;background:#ffffff"></div>
<div class="a" style="left:565px;top:347.0px;width:1566px;height:95.0px;background:#eaf5de"></div>
<div class="a" style="left:726.8px;top:347.0px;width:81.3px;height:95.0px;background:rgba(60,40,0,0.05)"></div>
<div class="a" style="left:808.1px;top:347.0px;width:81.3px;height:95.0px;background:rgba(60,40,0,0.05)"></div>
<div class="a" style="left:1295.7px;top:347.0px;width:81.3px;height:95.0px;background:rgba(60,40,0,0.05)"></div>
<div class="a" style="left:1377.0px;top:347.0px;width:81.3px;height:95.0px;background:rgba(60,40,0,0.05)"></div>
<div class="a" style="left:1864.7px;top:347.0px;width:81.3px;height:95.0px;background:rgba(60,40,0,0.05)"></div>
<div class="a" style="left:1946.0px;top:347.0px;width:81.3px;height:95.0px;background:rgba(60,40,0,0.05)"></div>
<div class="a" style="left:565px;top:442.0px;width:1566px;height:34.0px;background:#e4f3f5"></div>
<div class="a" style="left:726.8px;top:442.0px;width:81.3px;height:34.0px;background:rgba(60,40,0,0.05)"></div>
<div class="a" style="left:808.1px;top:442.0px;width:81.3px;height:34.0px;background:rgba(60,40,0,0.05)"></div>
<div class="a" style="left:1295.7px;top:442.0px;width:81.3px;height:34.0px;background:rgba(60,40,0,0.05)"></div>
<div class="a" style="left:1377.0px;top:442.0px;width:81.3px;height:34.0px;background:rgba(60,40,0,0.05)"></div>
<div class="a" style="left:1864.7px;top:442.0px;width:81.3px;height:34.0px;background:rgba(60,40,0,0.05)"></div>
<div class="a" style="left:1946.0px;top:442.0px;width:81.3px;height:34.0px;background:rgba(60,40,0,0.05)"></div>
<div class="a" style="left:565px;top:476.0px;width:1566px;height:95.6px;background:#fdecdf"></div>
<div class="a" style="left:726.8px;top:476.0px;width:81.3px;height:95.6px;background:rgba(60,40,0,0.05)"></div>
<div class="a" style="left:808.1px;top:476.0px;width:81.3px;height:95.6px;background:rgba(60,40,0,0.05)"></div>
<div class="a" style="left:1295.7px;top:476.0px;width:81.3px;height:95.6px;background:rgba(60,40,0,0.05)"></div>
<div class="a" style="left:1377.0px;top:476.0px;width:81.3px;height:95.6px;background:rgba(60,40,0,0.05)"></div>
<div class="a" style="left:1864.7px;top:476.0px;width:81.3px;height:95.6px;background:rgba(60,40,0,0.05)"></div>
<div class="a" style="left:1946.0px;top:476.0px;width:81.3px;height:95.6px;background:rgba(60,40,0,0.05)"></div>
<div class="a" style="left:565px;top:571.6px;width:1566px;height:95.4px;background:#f3ecfd"></div>
<div class="a" style="left:726.8px;top:571.6px;width:81.3px;height:95.4px;background:rgba(60,40,0,0.05)"></div>
<div class="a" style="left:808.1px;top:571.6px;width:81.3px;height:95.4px;background:rgba(60,40,0,0.05)"></div>
<div class="a" style="left:1295.7px;top:571.6px;width:81.3px;height:95.4px;background:rgba(60,40,0,0.05)"></div>
<div class="a" style="left:1377.0px;top:571.6px;width:81.3px;height:95.4px;background:rgba(60,40,0,0.05)"></div>
<div class="a" style="left:1864.7px;top:571.6px;width:81.3px;height:95.4px;background:rgba(60,40,0,0.05)"></div>
<div class="a" style="left:1946.0px;top:571.6px;width:81.3px;height:95.4px;background:rgba(60,40,0,0.05)"></div>
<div class="a" style="left:565px;top:667.0px;width:1566px;height:34.0px;background:#ddfbdf"></div>
<div class="a" style="left:726.8px;top:667.0px;width:81.3px;height:34.0px;background:rgba(60,40,0,0.05)"></div>
<div class="a" style="left:808.1px;top:667.0px;width:81.3px;height:34.0px;background:rgba(60,40,0,0.05)"></div>
<div class="a" style="left:1295.7px;top:667.0px;width:81.3px;height:34.0px;background:rgba(60,40,0,0.05)"></div>
<div class="a" style="left:1377.0px;top:667.0px;width:81.3px;height:34.0px;background:rgba(60,40,0,0.05)"></div>
<div class="a" style="left:1864.7px;top:667.0px;width:81.3px;height:34.0px;background:rgba(60,40,0,0.05)"></div>
<div class="a" style="left:1946.0px;top:667.0px;width:81.3px;height:34.0px;background:rgba(60,40,0,0.05)"></div>
<div class="a" style="left:565px;top:701.0px;width:1566px;height:22.0px;background:#fde9f4"></div>
<div class="a" style="left:726.8px;top:701.0px;width:81.3px;height:22.0px;background:rgba(60,40,0,0.05)"></div>
<div class="a" style="left:808.1px;top:701.0px;width:81.3px;height:22.0px;background:rgba(60,40,0,0.05)"></div>
<div class="a" style="left:1295.7px;top:701.0px;width:81.3px;height:22.0px;background:rgba(60,40,0,0.05)"></div>
<div class="a" style="left:1377.0px;top:701.0px;width:81.3px;height:22.0px;background:rgba(60,40,0,0.05)"></div>
<div class="a" style="left:1864.7px;top:701.0px;width:81.3px;height:22.0px;background:rgba(60,40,0,0.05)"></div>
<div class="a" style="left:1946.0px;top:701.0px;width:81.3px;height:22.0px;background:rgba(60,40,0,0.05)"></div>
<div class="a" style="left:565px;top:723.0px;width:1566px;height:95.0px;background:#f3f0e4"></div>
<div class="a" style="left:726.8px;top:723.0px;width:81.3px;height:95.0px;background:rgba(60,40,0,0.05)"></div>
<div class="a" style="left:808.1px;top:723.0px;width:81.3px;height:95.0px;background:rgba(60,40,0,0.05)"></div>
<div class="a" style="left:1295.7px;top:723.0px;width:81.3px;height:95.0px;background:rgba(60,40,0,0.05)"></div>
<div class="a" style="left:1377.0px;top:723.0px;width:81.3px;height:95.0px;background:rgba(60,40,0,0.05)"></div>
<div class="a" style="left:1864.7px;top:723.0px;width:81.3px;height:95.0px;background:rgba(60,40,0,0.05)"></div>
<div class="a" style="left:1946.0px;top:723.0px;width:81.3px;height:95.0px;background:rgba(60,40,0,0.05)"></div>
<div class="a" style="left:565px;top:818.0px;width:1566px;height:34.0px;background:#fdecea"></div>
<div class="a" style="left:726.8px;top:818.0px;width:81.3px;height:34.0px;background:rgba(60,40,0,0.05)"></div>
<div class="a" style="left:808.1px;top:818.0px;width:81.3px;height:34.0px;background:rgba(60,40,0,0.05)"></div>
<div class="a" style="left:1295.7px;top:818.0px;width:81.3px;height:34.0px;background:rgba(60,40,0,0.05)"></div>
<div class="a" style="left:1377.0px;top:818.0px;width:81.3px;height:34.0px;background:rgba(60,40,0,0.05)"></div>
<div class="a" style="left:1864.7px;top:818.0px;width:81.3px;height:34.0px;background:rgba(60,40,0,0.05)"></div>
<div class="a" style="left:1946.0px;top:818.0px;width:81.3px;height:34.0px;background:rgba(60,40,0,0.05)"></div>
<div class="a" style="left:565px;top:852.0px;width:1566px;height:35.0px;background:#dff7fb"></div>
<div class="a" style="left:726.8px;top:852.0px;width:81.3px;height:35.0px;background:rgba(60,40,0,0.05)"></div>
<div class="a" style="left:808.1px;top:852.0px;width:81.3px;height:35.0px;background:rgba(60,40,0,0.05)"></div>
<div class="a" style="left:1295.7px;top:852.0px;width:81.3px;height:35.0px;background:rgba(60,40,0,0.05)"></div>
<div class="a" style="left:1377.0px;top:852.0px;width:81.3px;height:35.0px;background:rgba(60,40,0,0.05)"></div>
<div class="a" style="left:1864.7px;top:852.0px;width:81.3px;height:35.0px;background:rgba(60,40,0,0.05)"></div>
<div class="a" style="left:1946.0px;top:852.0px;width:81.3px;height:35.0px;background:rgba(60,40,0,0.05)"></div>
<div class="a" style="left:565px;top:887.0px;width:1566px;height:34.0px;background:#e6fbdc"></div>
<div class="a" style="left:726.8px;top:887.0px;width:81.3px;height:34.0px;background:rgba(60,40,0,0.05)"></div>
<div class="a" style="left:808.1px;top:887.0px;width:81.3px;height:34.0px;background:rgba(60,40,0,0.05)"></div>
<div class="a" style="left:1295.7px;top:887.0px;width:81.3px;height:34.0px;background:rgba(60,40,0,0.05)"></div>
<div class="a" style="left:1377.0px;top:887.0px;width:81.3px;height:34.0px;background:rgba(60,40,0,0.05)"></div>
<div class="a" style="left:1864.7px;top:887.0px;width:81.3px;height:34.0px;background:rgba(60,40,0,0.05)"></div>
<div class="a" style="left:1946.0px;top:887.0px;width:81.3px;height:34.0px;background:rgba(60,40,0,0.05)"></div>
<div class="a" style="left:565px;top:921.0px;width:1566px;height:77.4px;background:#f2f3d6"></div>
<div class="a" style="left:726.8px;top:921.0px;width:81.3px;height:77.4px;background:rgba(60,40,0,0.05)"></div>
<div class="a" style="left:808.1px;top:921.0px;width:81.3px;height:77.4px;background:rgba(60,40,0,0.05)"></div>
<div class="a" style="left:1295.7px;top:921.0px;width:81.3px;height:77.4px;background:rgba(60,40,0,0.05)"></div>
<div class="a" style="left:1377.0px;top:921.0px;width:81.3px;height:77.4px;background:rgba(60,40,0,0.05)"></div>
<div class="a" style="left:1864.7px;top:921.0px;width:81.3px;height:77.4px;background:rgba(60,40,0,0.05)"></div>
<div class="a" style="left:1946.0px;top:921.0px;width:81.3px;height:77.4px;background:rgba(60,40,0,0.05)"></div>
<div class="a" style="left:1783.4px;top:572.6px;width:81.3px;height:94.4px;background:#d9e3fa"></div>
<div class="a" style="left:645.5px;top:313px;width:1px;height:686px;background:rgba(120,120,140,0.22)"></div>
<div class="a" style="left:726.8px;top:313px;width:1px;height:686px;background:rgba(120,120,140,0.22)"></div>
<div class="a" style="left:808.1px;top:313px;width:1px;height:686px;background:rgba(120,120,140,0.22)"></div>
<div class="a" style="left:889.3px;top:313px;width:1px;height:686px;background:rgba(120,120,140,0.22)"></div>
<div class="a" style="left:970.6px;top:313px;width:1px;height:686px;background:rgba(120,120,140,0.22)"></div>
<div class="a" style="left:1051.9px;top:313px;width:1px;height:686px;background:rgba(120,120,140,0.22)"></div>
<div class="a" style="left:1133.2px;top:313px;width:1px;height:686px;background:rgba(120,120,140,0.22)"></div>
<div class="a" style="left:1214.5px;top:313px;width:1px;height:686px;background:rgba(120,120,140,0.22)"></div>
<div class="a" style="left:1295.7px;top:313px;width:1px;height:686px;background:rgba(120,120,140,0.22)"></div>
<div class="a" style="left:1377.0px;top:313px;width:1px;height:686px;background:rgba(120,120,140,0.22)"></div>
<div class="a" style="left:1458.3px;top:313px;width:1px;height:686px;background:rgba(120,120,140,0.22)"></div>
<div class="a" style="left:1539.6px;top:313px;width:1px;height:686px;background:rgba(120,120,140,0.22)"></div>
<div class="a" style="left:1620.9px;top:313px;width:1px;height:686px;background:rgba(120,120,140,0.22)"></div>
<div class="a" style="left:1702.1px;top:313px;width:1px;height:686px;background:rgba(120,120,140,0.22)"></div>
<div class="a" style="left:1783.4px;top:313px;width:1px;height:686px;background:rgba(120,120,140,0.22)"></div>
<div class="a" style="left:1864.7px;top:313px;width:1px;height:686px;background:rgba(120,120,140,0.22)"></div>
<div class="a" style="left:1946.0px;top:313px;width:1px;height:686px;background:rgba(120,120,140,0.22)"></div>
<div class="a" style="left:2027.3px;top:313px;width:1px;height:686px;background:rgba(120,120,140,0.22)"></div>
<div class="a" style="left:2108.5px;top:313px;width:1px;height:686px;background:rgba(120,120,140,0.22)"></div>
<div class="a" style="left:565px;top:347px;width:1566px;height:1px;background:rgba(130,130,160,0.45)"></div>
<div class="a" style="left:565px;top:442px;width:1566px;height:1px;background:rgba(130,130,160,0.45)"></div>
<div class="a" style="left:565px;top:476px;width:1566px;height:1px;background:rgba(130,130,160,0.45)"></div>
<div class="a" style="left:565px;top:572px;width:1566px;height:1px;background:rgba(130,130,160,0.45)"></div>
<div class="a" style="left:565px;top:667px;width:1566px;height:1px;background:rgba(130,130,160,0.45)"></div>
<div class="a" style="left:565px;top:701px;width:1566px;height:1px;background:rgba(130,130,160,0.45)"></div>
<div class="a" style="left:565px;top:723px;width:1566px;height:1px;background:rgba(130,130,160,0.45)"></div>
<div class="a" style="left:565px;top:818px;width:1566px;height:1px;background:rgba(130,130,160,0.45)"></div>
<div class="a" style="left:565px;top:852px;width:1566px;height:1px;background:rgba(130,130,160,0.45)"></div>
<div class="a" style="left:565px;top:887px;width:1566px;height:1px;background:rgba(130,130,160,0.45)"></div>
<div class="a" style="left:565px;top:921px;width:1566px;height:1px;background:rgba(130,130,160,0.45)"></div>
<div class="a" style="left:645.5px;top:317.4px;width:1381.8px;height:27.5px;background:linear-gradient(90deg,#fdfdf3,#fdfde6 50%,#fdfdf3);border:2px solid #a3a396"></div>
<div class="t" style="left:1276.4px;width:120px;text-align:center;top:319.4px;font-size:19px;line-height:22px;color:#151530;letter-spacing:0.8px">12464</div>
<div class="a" style="left:645.5px;top:446.6px;width:1219.2px;height:27.5px;background:linear-gradient(90deg,#fdfdf3,#fdfde6 50%,#fdfdf3);border:2px solid #a3a396"></div>
<div class="t" style="left:1195.1px;width:120px;text-align:center;top:448.6px;font-size:19px;line-height:22px;color:#151530;letter-spacing:0.8px">2500</div>
<div class="a" style="left:645.5px;top:671.6px;width:1487.5px;height:27.5px;background:linear-gradient(90deg,#fdfdf3,#fdfde6 50%,#fdfdf3);border:2px solid #a3a396"></div>
<div class="t" style="left:1263.0px;width:120px;text-align:center;top:673.6px;font-size:19px;line-height:22px;color:#151530;letter-spacing:0.8px">28944</div>
<div class="t" style="left:2003px;top:673.5px;font-size:19px;line-height:22px;color:#151530">To 3<i class="c">月</i>31<i class="c">日</i></div>
<svg class="a" style="left:2108px;top:676.0px" width="18" height="16"><path d="M2 5H9V1.5L16 8L9 14.5V11H2Z" fill="#333" stroke="#111" stroke-width="1"/></svg>
<div class="a" style="left:1539.6px;top:822.6px;width:406.4px;height:27.5px;background:linear-gradient(90deg,#fdfdf3,#fdfde6 50%,#fdfdf3);border:2px solid #a3a396"></div>
<div class="t" style="left:1682.8px;width:120px;text-align:center;top:824.6px;font-size:19px;line-height:22px;color:#151530;letter-spacing:0.8px">500</div>
<div class="a" style="left:645.5px;top:891.6px;width:1056.6px;height:27.5px;background:linear-gradient(90deg,#fdfdf3,#fdfde6 50%,#fdfdf3);border:2px solid #a3a396"></div>
<div class="t" style="left:1113.8px;width:120px;text-align:center;top:893.6px;font-size:19px;line-height:22px;color:#151530;letter-spacing:0.8px">5000</div>
<div class="bar" style="left:645.5px;top:351.3px;width:162.6px;background:#4c9f5a;border:1px solid #24562c;line-height:27px">988</div>
<div class="bar" style="left:1458.3px;top:351.3px;width:162.6px;background:#4c9f5a;border:1px solid #24562c;line-height:27px">988</div>
<div class="bar" style="left:1620.9px;top:351.3px;width:162.6px;background:#4c9f5a;border:1px solid #24562c;line-height:27px">988</div>
<div class="bar" style="left:1783.4px;top:351.3px;width:162.6px;background:#4c9f5a;border:1px solid #24562c;line-height:27px">988</div>
<div class="bar" style="left:645.5px;top:381.6px;width:81.3px;background:#4c9f5a;border:1px solid #24562c;line-height:27px">836</div>
<div class="bar" style="left:1458.3px;top:381.6px;width:81.3px;background:#4c9f5a;border:1px solid #24562c;line-height:27px">836</div>
<div class="bar" style="left:1539.6px;top:381.6px;width:162.6px;background:#4c9f5a;border:1px solid #24562c;line-height:27px">988</div>
<div class="bar" style="left:1702.1px;top:381.6px;width:162.6px;background:#4c9f5a;border:1px solid #24562c;line-height:27px">988</div>
<div class="bar" style="left:1864.7px;top:381.6px;width:162.6px;background:#4c9f5a;border:1px solid #24562c;line-height:27px">988</div>
<div class="bar" style="left:1539.6px;top:411.9px;width:81.3px;background:#4c9f5a;border:1px solid #24562c;line-height:27px">836</div>
<div class="bar" style="left:1620.9px;top:411.9px;width:81.3px;background:#4c9f5a;border:1px solid #24562c;line-height:27px">836</div>
<div class="bar" style="left:1702.1px;top:411.9px;width:81.3px;background:#4c9f5a;border:1px solid #24562c;line-height:27px">836</div>
<div class="bar" style="left:1783.4px;top:411.9px;width:81.3px;background:#4c9f5a;border:1px solid #24562c;line-height:27px">532</div>
<div class="bar" style="left:1864.7px;top:411.9px;width:81.3px;background:#4c9f5a;border:1px solid #24562c;line-height:27px">836</div>
<div class="bar" style="left:970.6px;top:480.3px;width:162.6px;background:#6a2a21;border:1px solid #380e0a;line-height:27px">133</div>
<div class="bar" style="left:1133.2px;top:480.3px;width:162.6px;background:#6a2a21;border:1px solid #380e0a;line-height:27px">133</div>
<div class="bar" style="left:1295.7px;top:480.3px;width:162.6px;background:#6a2a21;border:1px solid #380e0a;line-height:27px">133</div>
<div class="bar" style="left:1458.3px;top:480.3px;width:162.6px;background:#6a2a21;border:1px solid #380e0a;line-height:27px">133</div>
<div class="bar" style="left:1620.9px;top:480.3px;width:162.6px;background:#6a2a21;border:1px solid #380e0a;line-height:27px">133</div>
<div class="bar" style="left:1051.9px;top:510.6px;width:162.6px;background:#6a2a21;border:1px solid #380e0a;line-height:27px">133</div>
<div class="bar" style="left:1214.5px;top:510.6px;width:162.6px;background:#6a2a21;border:1px solid #380e0a;line-height:27px">133</div>
<div class="bar" style="left:1458.3px;top:510.6px;width:81.3px;background:#6a2a21;border:1px solid #380e0a;line-height:27px">112</div>
<div class="bar" style="left:1539.6px;top:510.6px;width:162.6px;background:#6a2a21;border:1px solid #380e0a;line-height:27px">133</div>
<div class="bar" style="left:1702.1px;top:510.6px;width:162.6px;background:#6a2a21;border:1px solid #380e0a;line-height:27px">40</div>
<div class="bar" style="left:1051.9px;top:540.9px;width:81.3px;background:#6a2a21;border:1px solid #380e0a;line-height:27px">112</div>
<div class="bar" style="left:1133.2px;top:540.9px;width:81.3px;background:#6a2a21;border:1px solid #380e0a;line-height:27px">112</div>
<div class="bar" style="left:1214.5px;top:540.9px;width:81.3px;background:#6a2a21;border:1px solid #380e0a;line-height:27px">112</div>
<div class="bar" style="left:1295.7px;top:540.9px;width:81.3px;background:#6a2a21;border:1px solid #380e0a;line-height:27px">112</div>
<div class="bar" style="left:1539.6px;top:540.9px;width:81.3px;background:#6a2a21;border:1px solid #380e0a;line-height:27px">112</div>
<div class="bar" style="left:1620.9px;top:540.9px;width:81.3px;background:#6a2a21;border:1px solid #380e0a;line-height:27px">112</div>
<div class="bar" style="left:1702.1px;top:540.9px;width:81.3px;background:#6a2a21;border:1px solid #380e0a;line-height:27px">112</div>
<div class="bar" style="left:645.5px;top:575.9px;width:162.6px;background:#80a229;border:1px solid #4a6212;line-height:27px">110</div>
<div class="bar" style="left:889.3px;top:575.9px;width:81.3px;background:#80a229;border:1px solid #4a6212;line-height:27px">92</div>
<div class="bar" style="left:645.5px;top:606.2px;width:81.3px;background:#80a229;border:1px solid #4a6212;line-height:27px">94</div>
<div class="bar" style="left:726.8px;top:606.2px;width:162.6px;background:#80a229;border:1px solid #4a6212;line-height:27px">110</div>
<div class="bar" style="left:726.8px;top:636.5px;width:81.3px;background:#80a229;border:1px solid #4a6212;line-height:27px">94</div>
<div class="bar" style="left:645.5px;top:727.3px;width:162.6px;background:#2a52f0;border:1px solid #14288a;line-height:27px">988</div>
<div class="bar" style="left:808.1px;top:727.3px;width:162.6px;background:#2a52f0;border:1px solid #14288a;line-height:27px">988</div>
<div class="bar" style="left:970.6px;top:727.3px;width:162.6px;background:#2a52f0;border:1px solid #14288a;line-height:27px">988</div>
<div class="bar" style="left:1133.2px;top:727.3px;width:162.6px;background:#2a52f0;border:1px solid #14288a;line-height:27px">988</div>
<div class="bar" style="left:1295.7px;top:727.3px;width:162.6px;background:#2a52f0;border:1px solid #14288a;line-height:27px">988</div>
<div class="bar" style="left:645.5px;top:757.6px;width:81.3px;background:#2a52f0;border:1px solid #14288a;line-height:27px">836</div>
<div class="bar" style="left:726.8px;top:757.6px;width:162.6px;background:#2a52f0;border:1px solid #14288a;line-height:27px">988</div>
<div class="bar" style="left:889.3px;top:757.6px;width:162.6px;background:#2a52f0;border:1px solid #14288a;line-height:27px">988</div>
<div class="bar" style="left:1051.9px;top:757.6px;width:162.6px;background:#2a52f0;border:1px solid #14288a;line-height:27px">988</div>
<div class="bar" style="left:1214.5px;top:757.6px;width:162.6px;background:#2a52f0;border:1px solid #14288a;line-height:27px">988</div>
<div class="bar" style="left:1377.0px;top:757.6px;width:162.6px;background:#2a52f0;border:1px solid #14288a;line-height:27px">748</div>
<div class="bar" style="left:726.8px;top:787.9px;width:81.3px;background:#2a52f0;border:1px solid #14288a;line-height:27px">836</div>
<div class="bar" style="left:808.1px;top:787.9px;width:81.3px;background:#2a52f0;border:1px solid #14288a;line-height:27px">836</div>
<div class="bar" style="left:889.3px;top:787.9px;width:81.3px;background:#2a52f0;border:1px solid #14288a;line-height:27px">836</div>
<div class="bar" style="left:970.6px;top:787.9px;width:81.3px;background:#2a52f0;border:1px solid #14288a;line-height:27px">836</div>
<div class="bar" style="left:1051.9px;top:787.9px;width:81.3px;background:#2a52f0;border:1px solid #14288a;line-height:27px">836</div>
<div class="bar" style="left:1133.2px;top:787.9px;width:81.3px;background:#2a52f0;border:1px solid #14288a;line-height:27px">836</div>
<div class="bar" style="left:1214.5px;top:787.9px;width:81.3px;background:#2a52f0;border:1px solid #14288a;line-height:27px">836</div>
<div class="bar" style="left:1295.7px;top:787.9px;width:81.3px;background:#2a52f0;border:1px solid #14288a;line-height:27px">836</div>
<div class="bar" style="left:1377.0px;top:787.9px;width:81.3px;background:#2a52f0;border:1px solid #14288a;line-height:27px">836</div>
<div class="bar" style="left:1539.6px;top:856.3px;width:81.3px;background:#e8455c;border:1px solid #8a2030;line-height:27px">114</div>
<div class="bar" style="left:1620.9px;top:856.3px;width:81.3px;background:#e8455c;border:1px solid #8a2030;line-height:27px">114</div>
<div class="bar" style="left:1702.1px;top:856.3px;width:81.3px;background:#e8455c;border:1px solid #8a2030;line-height:27px">114</div>
<div class="bar" style="left:1783.4px;top:856.3px;width:81.3px;background:#e8455c;border:1px solid #8a2030;line-height:27px">114</div>
<div class="bar" style="left:1864.7px;top:856.3px;width:81.3px;background:#e8455c;border:1px solid #8a2030;line-height:27px">44</div>
<div class="bar" style="left:645.5px;top:925.3px;width:162.6px;background:#8900c9;border:1px solid #4a0078;line-height:27px">260</div>
<div class="bar" style="left:889.3px;top:925.3px;width:162.6px;background:#8900c9;border:1px solid #4a0078;line-height:27px">260</div>
<div class="bar" style="left:1051.9px;top:925.3px;width:162.6px;background:#8900c9;border:1px solid #4a0078;line-height:27px">260</div>
<div class="bar" style="left:1214.5px;top:925.3px;width:162.6px;background:#8900c9;border:1px solid #4a0078;line-height:27px">260</div>
<div class="bar" style="left:1458.3px;top:925.3px;width:162.6px;background:#8900c9;border:1px solid #4a0078;line-height:27px">260</div>
<div class="bar" style="left:1620.9px;top:925.3px;width:81.3px;background:#8900c9;border:1px solid #4a0078;line-height:27px">200</div>
<div class="bar" style="left:645.5px;top:955.6px;width:81.3px;background:#8900c9;border:1px solid #4a0078;line-height:27px">220</div>
<div class="bar" style="left:726.8px;top:955.6px;width:162.6px;background:#8900c9;border:1px solid #4a0078;line-height:27px">260</div>
<div class="bar" style="left:889.3px;top:955.6px;width:81.3px;background:#8900c9;border:1px solid #4a0078;line-height:27px">220</div>
<div class="bar" style="left:970.6px;top:955.6px;width:162.6px;background:#8900c9;border:1px solid #4a0078;line-height:27px">260</div>
<div class="bar" style="left:1133.2px;top:955.6px;width:162.6px;background:#8900c9;border:1px solid #4a0078;line-height:27px">260</div>
<div class="bar" style="left:1295.7px;top:955.6px;width:162.6px;background:#8900c9;border:1px solid #4a0078;line-height:27px">260</div>
<div class="bar" style="left:1458.3px;top:955.6px;width:81.3px;background:#8900c9;border:1px solid #4a0078;line-height:27px">220</div>
<div class="bar" style="left:1539.6px;top:955.6px;width:162.6px;background:#8900c9;border:1px solid #4a0078;line-height:27px">260</div>
<div class="a" style="left:784px;top:979px;width:22px;height:22px;border-radius:50%;background:radial-gradient(circle at 50% 35%,#ffffff,#e4e4e8);border:1px solid #a8a8b0"></div>
<svg class="a" style="left:790.0px;top:987.5px" width="10" height="5"><path d="M0 0H10L5 5Z" fill="#666"/></svg>
<div class="a" style="left:1028px;top:979px;width:22px;height:22px;border-radius:50%;background:radial-gradient(circle at 50% 35%,#ffffff,#e4e4e8);border:1px solid #a8a8b0"></div>
<svg class="a" style="left:1034.0px;top:987.5px" width="10" height="5"><path d="M0 0H10L5 5Z" fill="#666"/></svg>
<div class="a" style="left:1109px;top:979px;width:22px;height:22px;border-radius:50%;background:radial-gradient(circle at 50% 35%,#ffffff,#e4e4e8);border:1px solid #a8a8b0"></div>
<svg class="a" style="left:1115.0px;top:987.5px" width="10" height="5"><path d="M0 0H10L5 5Z" fill="#666"/></svg>
<div class="a" style="left:1190px;top:979px;width:22px;height:22px;border-radius:50%;background:radial-gradient(circle at 50% 35%,#ffffff,#e4e4e8);border:1px solid #a8a8b0"></div>
<svg class="a" style="left:1196.0px;top:987.5px" width="10" height="5"><path d="M0 0H10L5 5Z" fill="#666"/></svg>
<div class="a" style="left:1272px;top:979px;width:22px;height:22px;border-radius:50%;background:radial-gradient(circle at 50% 35%,#ffffff,#e4e4e8);border:1px solid #a8a8b0"></div>
<svg class="a" style="left:1278.0px;top:987.5px" width="10" height="5"><path d="M0 0H10L5 5Z" fill="#666"/></svg>
<div class="a" style="left:1353px;top:979px;width:22px;height:22px;border-radius:50%;background:radial-gradient(circle at 50% 35%,#ffffff,#e4e4e8);border:1px solid #a8a8b0"></div>
<svg class="a" style="left:1359.0px;top:987.5px" width="10" height="5"><path d="M0 0H10L5 5Z" fill="#666"/></svg>
<div class="a" style="left:1596px;top:979px;width:22px;height:22px;border-radius:50%;background:radial-gradient(circle at 50% 35%,#ffffff,#e4e4e8);border:1px solid #a8a8b0"></div>
<svg class="a" style="left:1602.0px;top:987.5px" width="10" height="5"><path d="M0 0H10L5 5Z" fill="#666"/></svg>
<svg class="a" style="left:578.5px;top:708.0px" width="5" height="10"><path d="M5 0V10L0 5Z" fill="#aaa"/></svg>
<div class="a" style="left:596px;top:702px;width:2px;height:40px;background:linear-gradient(rgba(200,200,210,0.8),rgba(200,200,210,0))"></div>
<svg class="a" style="left:2110.5px;top:708.0px" width="5" height="10"><path d="M0 0V10L5 5Z" fill="#222"/></svg>
<div class="a" style="left:2095px;top:702px;width:2px;height:40px;background:linear-gradient(rgba(120,120,130,0.8),rgba(200,200,210,0))"></div>
<div class="a" style="left:565px;top:999.5px;width:1566px;height:23.5px;background:#eff0f3"></div>
<svg class="a" style="left:575.5px;top:1007.0px" width="5" height="10"><path d="M5 0V10L0 5Z" fill="#666"/></svg>
<div class="a" style="left:1230px;top:1007px;width:213px;height:10px;border-radius:5px;background:linear-gradient(#e1e2e8,#cfd1d9);border:1px solid #a0a3ad"></div>
<svg class="a" style="left:2114.5px;top:1007.0px" width="5" height="10"><path d="M0 0V10L5 5Z" fill="#666"/></svg>
<div class="a" style="left:2131px;top:234px;width:26px;height:576px;background:#f0f0f3"></div>
<svg class="a" style="left:2139.0px;top:242.5px" width="10" height="5"><path d="M0 5H10L5 0Z" fill="#777"/></svg>
<div class="a" style="left:2139px;top:257px;width:12px;height:264px;border-radius:6px;background:linear-gradient(90deg,#d4d6de,#f3f3f6,#c9cbd3);border:1px solid #a4a7b1"></div>
<svg class="a" style="left:2139.0px;top:797.5px" width="10" height="5"><path d="M0 0H10L5 5Z" fill="#777"/></svg>
<div class="a" style="left:2131px;top:810px;width:26px;height:189px;background:#fff"></div>
<div class="a" style="left:2131px;top:999px;width:26px;height:24px;background:#e4e5ea"></div>
<svg class="a" style="left:2138px;top:816px" width="12" height="12"><path d="M1.5 1.5H10.5M6 6V10.5M2 10.5H10" stroke="#333" stroke-width="1.4"/><path d="M6 2.5L2 6.5H10Z" fill="#333"/></svg>
<svg class="a" style="left:2138px;top:840px" width="12" height="12"><path d="M6 1L2 5H10Z M6 5L2 9H10Z" fill="#333"/><path d="M2 10.5H10" stroke="#333" stroke-width="1.4"/></svg>
<svg class="a" style="left:2138px;top:864px" width="12" height="12"><path d="M6 4L2 8H10Z" fill="#666"/></svg>
<svg class="a" style="left:2138px;top:887px" width="12" height="12"><path d="M2 4H10L6 8Z" fill="#222"/></svg>
<svg class="a" style="left:2138px;top:910px" width="12" height="12"><path d="M2 1.5H10L6 5.5Z M2 5.5H10L6 9.5Z" fill="#222"/></svg>
<svg class="a" style="left:2138px;top:934px" width="12" height="12"><path d="M1.5 10.5H10.5M6 1.5V6M2 1.5H10" stroke="#222" stroke-width="1.4"/><path d="M2 5.5H10L6 9.5Z" fill="#222"/></svg>
<svg class="a" style="left:2138px;top:957px" width="12" height="12"><path d="M6 1V11M1 6H11" stroke="#222" stroke-width="1.6"/></svg>
<svg class="a" style="left:2138px;top:981px" width="12" height="12"><path d="M1 6H11" stroke="#222" stroke-width="1.6"/></svg>
<svg class="a" style="left:955px;top:613px" width="44" height="52"><path d="M1.5 20L20 1.5L38.5 20L20 38.5Z" fill="#fff" style="filter:drop-shadow(0 1px 1px rgba(0,0,0,.3))"/><path d="M20 4L25.5 11H21.5V17H18.5V11H14.5Z M4 20L11 14.5V18.5H17V21.5H11V25.5Z M36 20L29 14.5V18.5H23V21.5H29V25.5Z" fill="#000"/><path d="M10.5 9.5h5v5h-5z M24 9.5h5v5h-5z M10.5 24h5v5h-5z" fill="#cbc6d6"/><path d="M20 18V48.5L27.5 41L40.5 40.5Z" fill="#000" stroke="#fff" stroke-width="2.2" stroke-linejoin="miter"/></svg>
<div class="t" style="left:143px;top:1043px;font-size:19px;line-height:22px;color:#1a1a30;"><i class="c">备</i><i class="c">注</i>:</div>
<div class="a" style="left:221px;top:1040px;width:1791px;height:72px;background:#fff;border:2px solid #9fa2ad;border-bottom-color:#cfd1d8;border-right-color:#cfd1d8"></div>
<div class="a" style="left:1980px;top:1042px;width:28px;height:68px;background:#eeeff2"></div>
<svg class="a" style="left:1989.0px;top:1050.5px" width="10" height="5"><path d="M0 5H10L5 0Z" fill="#bbb"/></svg>
<svg class="a" style="left:1989.0px;top:1095.5px" width="10" height="5"><path d="M0 0H10L5 5Z" fill="#bbb"/></svg>
<div class="t" style="left:101px;top:1133px;font-size:19px;line-height:22px;color:#1a1a30;letter-spacing:1px"><i class="c">创</i>&nbsp;<i class="c">建</i>&nbsp;<i class="c">人</i>:</div>
<div class="a" style="left:221px;top:1124px;width:264px;height:27px;background:#f0f0f4;border:1px solid #a7aab5;border-top:2px solid #858896;border-left:1px solid #9a9da9"></div>
<div class="t" style="left:228px;top:1126px;font-size:19px;line-height:22px;color:#111;letter-spacing:0.3px">(60454)<i class="c">李</i><i class="c">晓</i></div>
<div class="t" style="left:568px;top:1133px;font-size:19px;line-height:22px;color:#1a1a30;letter-spacing:1px"><i class="c">修</i>&nbsp;<i class="c">改</i>&nbsp;<i class="c">人</i>:</div>
<div class="a" style="left:699px;top:1124px;width:264px;height:27px;background:#f0f0f4;border:1px solid #a7aab5;border-top:2px solid #858896;border-left:1px solid #9a9da9"></div>
<div class="t" style="left:1034px;top:1133px;font-size:19px;line-height:22px;color:#1a1a30;letter-spacing:1px"><i class="c">审</i>&nbsp;<i class="c">核</i>&nbsp;<i class="c">人</i>:</div>
<div class="a" style="left:1162px;top:1124px;width:264px;height:27px;background:#f0f0f4;border:1px solid #a7aab5;border-top:2px solid #858896;border-left:1px solid #9a9da9"></div>
<div class="t" style="left:101px;top:1179px;font-size:19px;line-height:22px;color:#1a1a30;"><i class="c">创</i><i class="c">建</i><i class="c">时</i><i class="c">间</i>:</div>
<div class="a" style="left:221px;top:1164px;width:264px;height:27px;background:#f0f0f4;border:1px solid #a7aab5;border-top:2px solid #858896;border-left:1px solid #9a9da9"></div>
<div class="t" style="left:228px;top:1166px;font-size:19px;line-height:22px;color:#111;letter-spacing:0.9px">2019-02-23 08:44:54</div>
<div class="t" style="left:568px;top:1179px;font-size:19px;line-height:22px;color:#1a1a30;"><i class="c">修</i><i class="c">改</i><i class="c">时</i><i class="c">间</i>:</div>
<div class="a" style="left:699px;top:1165px;width:264px;height:27px;background:#f0f0f4;border:1px solid #a7aab5;border-top:2px solid #858896;border-left:1px solid #9a9da9"></div>
<div class="t" style="left:1034px;top:1179px;font-size:19px;line-height:22px;color:#1a1a30;"><i class="c">审</i><i class="c">核</i><i class="c">时</i><i class="c">间</i>:</div>
<div class="a" style="left:1161px;top:1165px;width:264px;height:27px;background:#f0f0f4;border:1px solid #a7aab5;border-top:2px solid #858896;border-left:1px solid #9a9da9"></div>
<div class="a" style="left:2169px;top:143px;width:55px;height:1070px;background:#ebebeb"></div>
<div class="a" style="left:2168px;top:143px;width:50px;height:1066px;border:2px solid #9a9dab;border-left:none;background:#fff"></div>
<div class="a" style="left:2167px;top:143px;width:2px;height:1060px;background:#8f929e"></div>
<div class="a" style="left:2169px;top:149px;width:44px;height:77px;background:linear-gradient(90deg,#e8e9ee,#d7d9e0);border:2px solid #9a9dab;border-left:none"></div>
<div class="a" style="left:2169px;top:304px;width:44px;height:84px;background:linear-gradient(90deg,#e8e9ee,#d7d9e0);border:2px solid #9a9dab;border-left:none"></div>
<div class="t" style="left:2156.0px;top:176px;width:70px;text-align:center;transform:rotate(90deg);font-size:19px;line-height:22px;color:#333;letter-spacing:0px"><i class="c">列</i>&nbsp;<i class="c">表</i></div>
<div class="t" style="left:2158.0px;top:253px;width:70px;text-align:center;transform:rotate(90deg);font-size:19px;line-height:22px;color:#333;letter-spacing:0px"><i class="c">明</i>&nbsp;<i class="c">细</i></div>
<div class="t" style="left:2156.0px;top:335px;width:70px;text-align:center;transform:rotate(90deg);font-size:19px;line-height:22px;color:#333;letter-spacing:0px"><i class="c">明</i><i class="c">细</i><i class="c">新</i></div>
</body></html>
